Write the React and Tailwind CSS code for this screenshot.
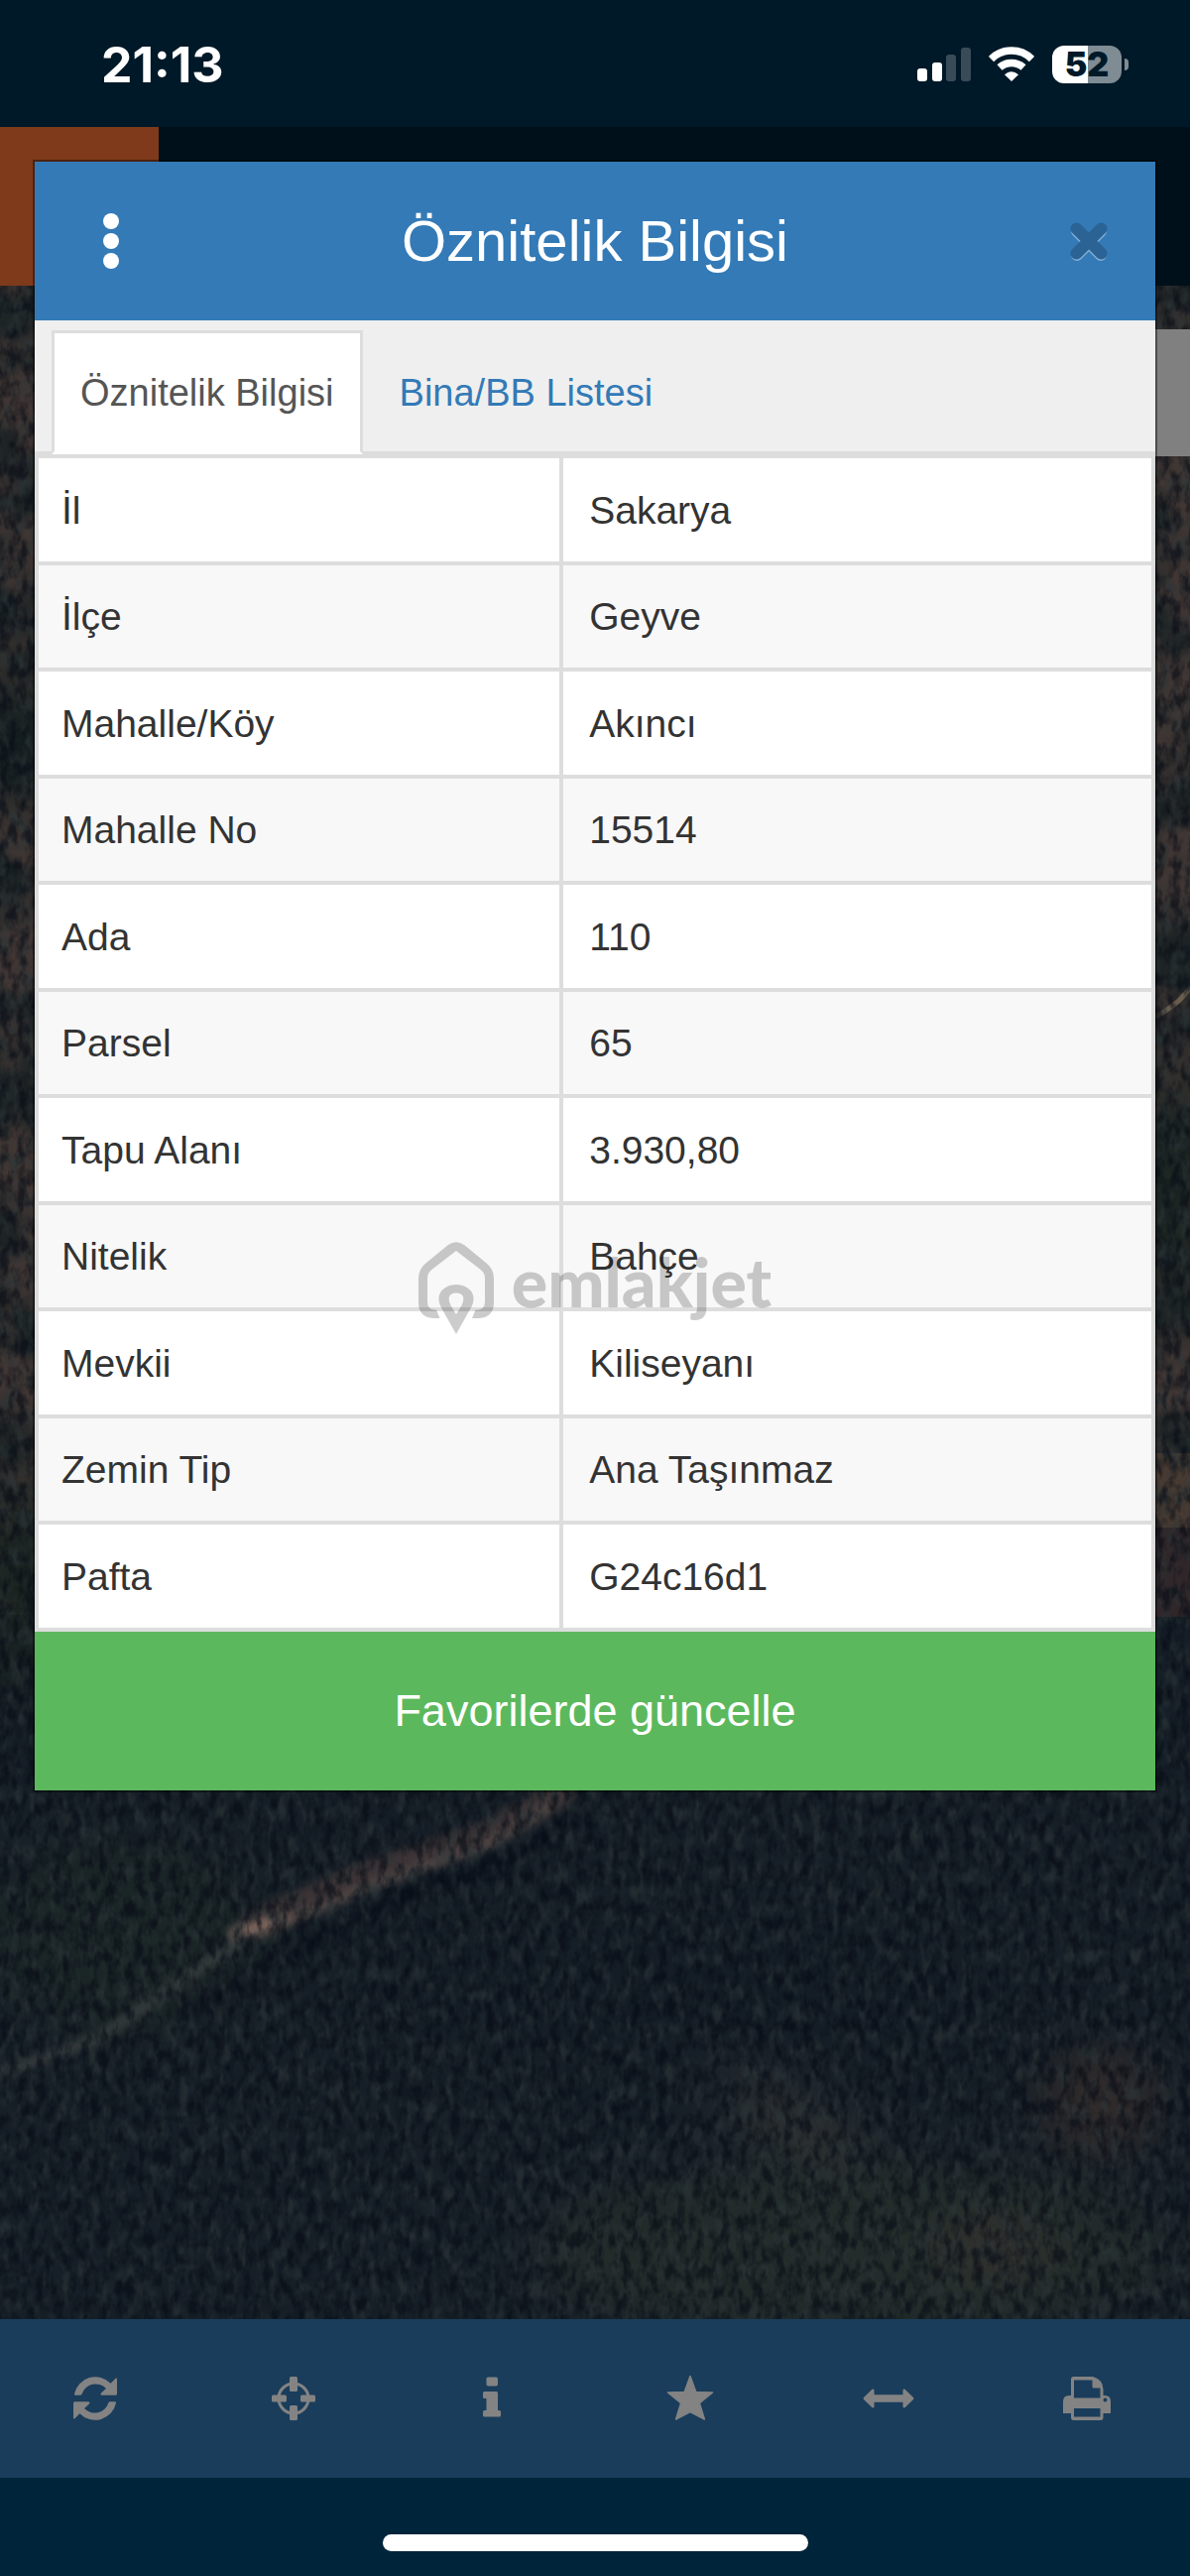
import React, { useState } from "react";

const attributes = [
  { label: "İl", value: "Sakarya" },
  { label: "İlçe", value: "Geyve" },
  { label: "Mahalle/Köy", value: "Akıncı" },
  { label: "Mahalle No", value: "15514" },
  { label: "Ada", value: "110" },
  { label: "Parsel", value: "65" },
  { label: "Tapu Alanı", value: "3.930,80" },
  { label: "Nitelik", value: "Bahçe" },
  { label: "Mevkii", value: "Kiliseyanı" },
  { label: "Zemin Tip", value: "Ana Taşınmaz" },
  { label: "Pafta", value: "G24c16d1" },
];

const RefreshIcon = () => (
  <svg width="44" height="44" viewBox="0 0 44 44" fill="currentColor">
    <path d="M1 17.5A21.5 21.5 0 0 1 37.6 6.8L42.6 1.8Q44 .8 44 2.8V17.3Q44 18.8 42.5 18.8H29Q26.5 18.4 28 16.4L33 12A14.5 14.5 0 0 0 8.6 17.6Q8.2 18.8 7 18.8H2Q.8 18.8 1 17.5Z" />
    <path d="M43 26.5A21.5 21.5 0 0 1 6.4 37.2L1.4 42.2Q0 43.2 0 41.2V26.7Q0 25.2 1.5 25.2H15Q17.5 25.6 16 27.6L11 32A14.5 14.5 0 0 0 35.4 26.4Q35.8 25.2 37 25.2H42Q43.2 25.2 43 26.5Z" />
  </svg>
);

const LocateIcon = () => (
  <svg width="44" height="44" viewBox="0 0 44 44" fill="currentColor">
    <circle cx="22" cy="22" r="15" fill="none" stroke="currentColor" strokeWidth="3" />
    <rect x="18" y="0" width="8" height="15" rx="1.5" />
    <rect x="18" y="29" width="8" height="15" rx="1.5" />
    <rect x="0" y="18.5" width="15" height="7" rx="1.5" />
    <rect x="29" y="18.5" width="15" height="7" rx="1.5" />
  </svg>
);

const InfoIcon = () => (
  <svg width="20" height="44" viewBox="0 0 20 44" fill="currentColor">
    <rect x="4.5" y="0.5" width="11.5" height="9" rx="1.8" />
    <path d="M2.5 15H14.5Q16 15 16 16.5V34H17.5Q19 34 19 35.5V39Q19 40.5 17.5 40.5H2.5Q1 40.5 1 39V35.5Q1 34 2.5 34H4.5V22H2.5Q1 22 1 20.5V16.5Q1 15 2.5 15Z" />
  </svg>
);

const StarIcon = () => (
  <svg width="48" height="48" viewBox="0 0 48 48" fill="currentColor">
    <path
      d="M24 1.5L29.8 17.5L46.6 18L33.4 28.6L38.4 45L24 37.5L9.6 45L14.6 28.6L1.4 18L18.2 17.5Z"
      stroke="currentColor"
      strokeWidth="1.5"
      strokeLinejoin="round"
    />
  </svg>
);

const MeasureIcon = () => (
  <svg width="52" height="20" viewBox="0 0 52 20" fill="currentColor">
    <path d="M1 9L9.5 .8Q11.5 0 11.5 2V6.2H40.5V2Q40.5 0 42.5 .8L51 9Q52 10 51 11L42.5 19.2Q40.5 20 40.5 18V13.8H11.5V18Q11.5 20 9.5 19.2L1 11Q0 10 1 9Z" />
  </svg>
);

const PrintIcon = () => (
  <svg width="48" height="44" viewBox="0 0 48 44">
    <path
      fill="currentColor"
      fillRule="evenodd"
      d="M10.5 0H30Q40.5 3 40.5 13V19Q48 18 48 25V37H40.5V41Q40.5 44 38 44H10.5Q8 44 8 41V37H0V25Q0 18 8 19V2.5Q8 0 10.5 0ZM11 3.5V21.5H37.5V11.5H31Q29.5 11.5 29.5 10V3.5ZM11 32V40.5H37.5V32ZM42.5 21.5A2 2 0 1 0 42.5 25.5A2 2 0 1 0 42.5 21.5Z"
    />
  </svg>
);

const SignalIcon = () => (
  <svg width="54" height="34" viewBox="0 0 54 34" fill="#fff">
    <rect x="0" y="21" width="10" height="13" rx="3" />
    <rect x="15" y="15" width="10" height="19" rx="3" />
    <rect x="29" y="7" width="10" height="27" rx="3" opacity=".22" />
    <rect x="44" y="0" width="10" height="34" rx="3" opacity=".22" />
  </svg>
);

const WifiIcon = () => (
  <svg width="46" height="36" viewBox="0 0 46 36" fill="none" stroke="#fff">
    <path d="M2.5 12.5A29 29 0 0 1 43.500 12.500" strokeWidth="7.5" />
    <path d="M11 21A18 18 0 0 1 35 21" strokeWidth="7.5" />
    <path d="M23 35L16 28.200Q23 22.500 30 28.200Z" fill="#fff" stroke="none" />
  </svg>
);

const Battery = () => (
  <div className="flex items-center gap-[3px]">
    <div className="flex h-[38px] w-[70px] items-center justify-center rounded-[12px] bg-[linear-gradient(90deg,#fff_51%,#7f8c94_51%)] text-[34px] leading-none font-black text-[#001928]">
      52
    </div>
    <div className="h-3 w-1 rounded-r-full bg-[#7f8c94]" />
  </div>
);

const CloseIcon = () => (
  <svg width="44" height="46" viewBox="0 0 44 46" fill="none" strokeWidth="9" strokeLinejoin="round">
    <path d="M10 13L34 37M34 13L10 37" stroke="#83aed3" strokeWidth="12" strokeLinecap="round" />
    <path d="M9.500 10.500L34.500 35.500M34.500 10.500L9.500 35.500" stroke="#2a6394" strokeWidth="12" strokeLinecap="round" />
  </svg>
);

// Dimmed aerial photo of woodland behind the dialog
const SatelliteMap = () => (
  <svg
    className="absolute inset-0 h-full w-full"
    viewBox="0 288 1200 2050"
    preserveAspectRatio="none"
    aria-hidden="true">
    <defs>
      <filter id="trees" x="0" y="0" width="100%" height="100%" colorInterpolationFilters="sRGB">
        <feTurbulence type="fractalNoise" baseFrequency="0.11 0.06" numOctaves="3" seed="8" />
        <feColorMatrix values="0 0 0 0 0.02  0 0 0 0 0.04  0 0 0 0 0.08  3 0 0 0 -1.2" />
      </filter>
      <filter id="crowns" x="0" y="0" width="100%" height="100%" colorInterpolationFilters="sRGB">
        <feTurbulence type="fractalNoise" baseFrequency="0.1 0.05" numOctaves="2" seed="3" />
        <feColorMatrix values="0 0 0 0 0.17  0 0 0 0 0.21  0 0 0 0 0.22  0 3 0 0 -1.3" />
      </filter>
      <filter id="soil" x="0" y="0" width="100%" height="100%" colorInterpolationFilters="sRGB">
        <feTurbulence type="fractalNoise" baseFrequency="0.012 0.014" numOctaves="4" seed="5" />
        <feColorMatrix values="0 0 0 0 0.25  0 0 0 0 0.21  0 0 0 0 0.2  4 0 0 0 -1.5" />
      </filter>
      <filter id="haze" x="-50%" y="-50%" width="200%" height="200%" colorInterpolationFilters="sRGB">
        <feGaussianBlur stdDeviation="28" />
      </filter>
      <filter id="edge" x="-20%" y="-20%" width="140%" height="140%" colorInterpolationFilters="sRGB">
        <feGaussianBlur stdDeviation="5" />
      </filter>
    </defs>
    <rect y="288" width="1200" height="2050" fill="#161f27" />
    <rect y="288" width="1200" height="1340" fill="#1e2425" />
    <rect y="288" width="1200" height="1340" filter="url(#soil)" />
    <g filter="url(#haze)">
      <ellipse cx="860" cy="2270" rx="330" ry="90" fill="#232c2a" />
      <ellipse cx="120" cy="1950" rx="150" ry="110" fill="#1a2526" />
      <ellipse cx="1110" cy="2120" rx="60" ry="50" fill="#352d2c" />
      <ellipse cx="800" cy="2140" rx="90" ry="20" fill="#3c3a38" transform="rotate(28 800 2140)" />
      <ellipse cx="1000" cy="2265" rx="70" ry="24" fill="#38342f" />
      <ellipse cx="1180" cy="1190" rx="40" ry="110" fill="#17221f" />
      <ellipse cx="15" cy="740" rx="35" ry="80" fill="#141f20" />
      <ellipse cx="15" cy="1610" rx="35" ry="120" fill="#1a2420" />
      <ellipse cx="700" cy="2010" rx="300" ry="50" fill="#141d26" />
    </g>
    <rect x="1165" y="1465" width="35" height="75" fill="#463a32" />
    <rect x="1165" y="1540" width="35" height="90" fill="#30272a" />
    <path d="M1165 1025Q1190 1012 1200 995" stroke="#6b5e50" strokeWidth="5" fill="none" />
    <g filter="url(#edge)" fill="none" strokeLinecap="round" strokeLinejoin="round">
      <path d="M566 1808L490 1850L367 1890L255 1940" stroke="#3c3436" strokeWidth="26" />
      <path d="M555 1822L490 1860L377 1900L260 1950" stroke="#5b4e4a" strokeWidth="8" />
      <path d="M260 1945L184 1996L99 2055L0 2091" stroke="#3b4040" strokeWidth="10" />
      <path d="M285 1934L236 1950" stroke="#80685e" strokeWidth="12" />
      <path d="M590 1828L505 1878L377 1926L285 1975L190 2030" stroke="#0b111c" strokeWidth="10" />
    </g>
    <rect y="288" width="1200" height="2050" filter="url(#crowns)" opacity=".6" />
    <rect y="288" width="1200" height="2050" filter="url(#trees)" opacity=".6" />
  </svg>
);

const Watermark = () => (
  <div className="pointer-events-none absolute inset-x-0 top-[1088px] flex items-start justify-center gap-[18px] text-black/20">
    <svg width="76" height="96" viewBox="0 0 76 96" fill="currentColor" fillRule="evenodd">
      <path d="M21.5 78H15Q0 77 0 62V38Q0 28 8 22L30 4Q38 -1.5 46 4L68 22Q76 28 76 38V62Q76 77 61 78H54L57.5 69.5H60Q67 69 67 61V38Q67 32 62 28.5L38 10L14 28.5Q9 32 9 38V61Q9 69 16 69.5H18Z" />
      <path d="M38 94L24.5 70Q17 58 23.5 50Q29 44 38 44Q47 44 52.5 50Q59 58 51.5 70ZM38 74L43.5 65Q49 53 38 52.5Q27 53 32.5 65Z" />
    </svg>
    <span className="font-['Lato',sans-serif] text-[68px] leading-[82px] font-black">emlakjet</span>
  </div>
);

const toolbarItems = [
  { label: "Yenile", icon: RefreshIcon },
  { label: "Konum", icon: LocateIcon },
  { label: "Bilgi", icon: InfoIcon },
  { label: "Favoriler", icon: StarIcon },
  { label: "Ölçüm", icon: MeasureIcon },
  { label: "Yazdır", icon: PrintIcon },
];

const tabs = ["Öznitelik Bilgisi", "Bina/BB Listesi"];

const AttributeDialog = () => {
  const [activeTab, setActiveTab] = useState(tabs[0]);

  return (
    <section
      role="dialog"
      aria-label="Öznitelik Bilgisi"
      className="absolute inset-x-[35px] top-[163px] bg-white shadow-[0_0_0_2px_rgba(0,0,0,0.4)]">
      <header className="grid h-40 grid-cols-[1fr_auto_1fr] items-center bg-[#337ab7] px-[45px] text-white">
        <button aria-label="Menü" className="flex w-16 flex-col items-center gap-1 justify-self-start">
          <span className="h-4 w-4 rounded-full bg-white" />
          <span className="h-4 w-4 rounded-full bg-white" />
          <span className="h-4 w-4 rounded-full bg-white" />
        </button>
        <h1 className="text-[58px] leading-none">Öznitelik Bilgisi</h1>
        <button aria-label="Kapat" className="justify-self-end">
          <CloseIcon />
        </button>
      </header>

      <div role="tablist" className="flex border-b-3 border-[#ddd] bg-[#efefef] px-[17px] pt-[10px]">
        {tabs.map((tab) => (
          <button
            key={tab}
            role="tab"
            aria-selected={tab === activeTab}
            onClick={() => setActiveTab(tab)}
            className={`-mb-[3px] mr-2 h-[125px] border-3 px-[26px] text-[38px] leading-none ${
              tab === activeTab
                ? "border-[#ddd] border-b-white bg-white text-[#555]"
                : "border-transparent text-[#337ab7]"
            }`}>
            {tab}
          </button>
        ))}
      </div>

      <table className="w-full table-fixed border-collapse text-left text-[39px] leading-none text-[#333]">
        <colgroup>
          <col className="w-[47%]" />
          <col />
        </colgroup>
        <tbody>
          {attributes.map(({ label, value }) => (
            <tr key={label} className="h-[108px] even:h-[107px] even:bg-[#f8f8f8]">
              <th scope="row" className="border-4 border-[#ddd] px-[23px] font-normal">
                {label}
              </th>
              <td className="border-4 border-[#ddd] px-[26px]">{value}</td>
            </tr>
          ))}
        </tbody>
      </table>

      <button className="block h-40 w-full bg-[#5cb85c] text-[45px] text-white">
        Favorilerde güncelle
      </button>

      <Watermark />
    </section>
  );
};

const App = () => (
  <div className="relative flex min-h-screen flex-col bg-[#00243a] font-['Liberation_Sans',Arial,sans-serif]">
    <div className="flex h-32 items-center justify-between bg-[#001928] pt-[2px] pr-[62px] pl-[102px] font-['Inter',sans-serif]">
      <span className="text-[50px] leading-none font-bold text-white">21:13</span>
      <div className="flex items-center gap-[18px]">
        <SignalIcon />
        <WifiIcon />
        <Battery />
      </div>
    </div>

    <div className="h-40 bg-[#00101a]">
      <div className="h-full w-40 bg-[#7f3a1b]" />
    </div>

    <main className="relative flex-1 overflow-hidden">
      <SatelliteMap />
      <div className="relative mt-11 ml-auto h-32 w-32 bg-[#808080]" />
    </main>

    <nav className="grid h-40 grid-cols-6 bg-[#1a3d5b] text-[#838383]">
      {toolbarItems.map(({ label, icon: Icon }) => (
        <button key={label} aria-label={label} className="mr-2 flex items-center justify-center">
          <Icon />
        </button>
      ))}
    </nav>

    <div className="flex h-[99px] items-end justify-center pb-[25px]">
      <div className="h-[17px] w-[429px] rounded-full bg-white" />
    </div>

    <AttributeDialog />
  </div>
);

export default App;
